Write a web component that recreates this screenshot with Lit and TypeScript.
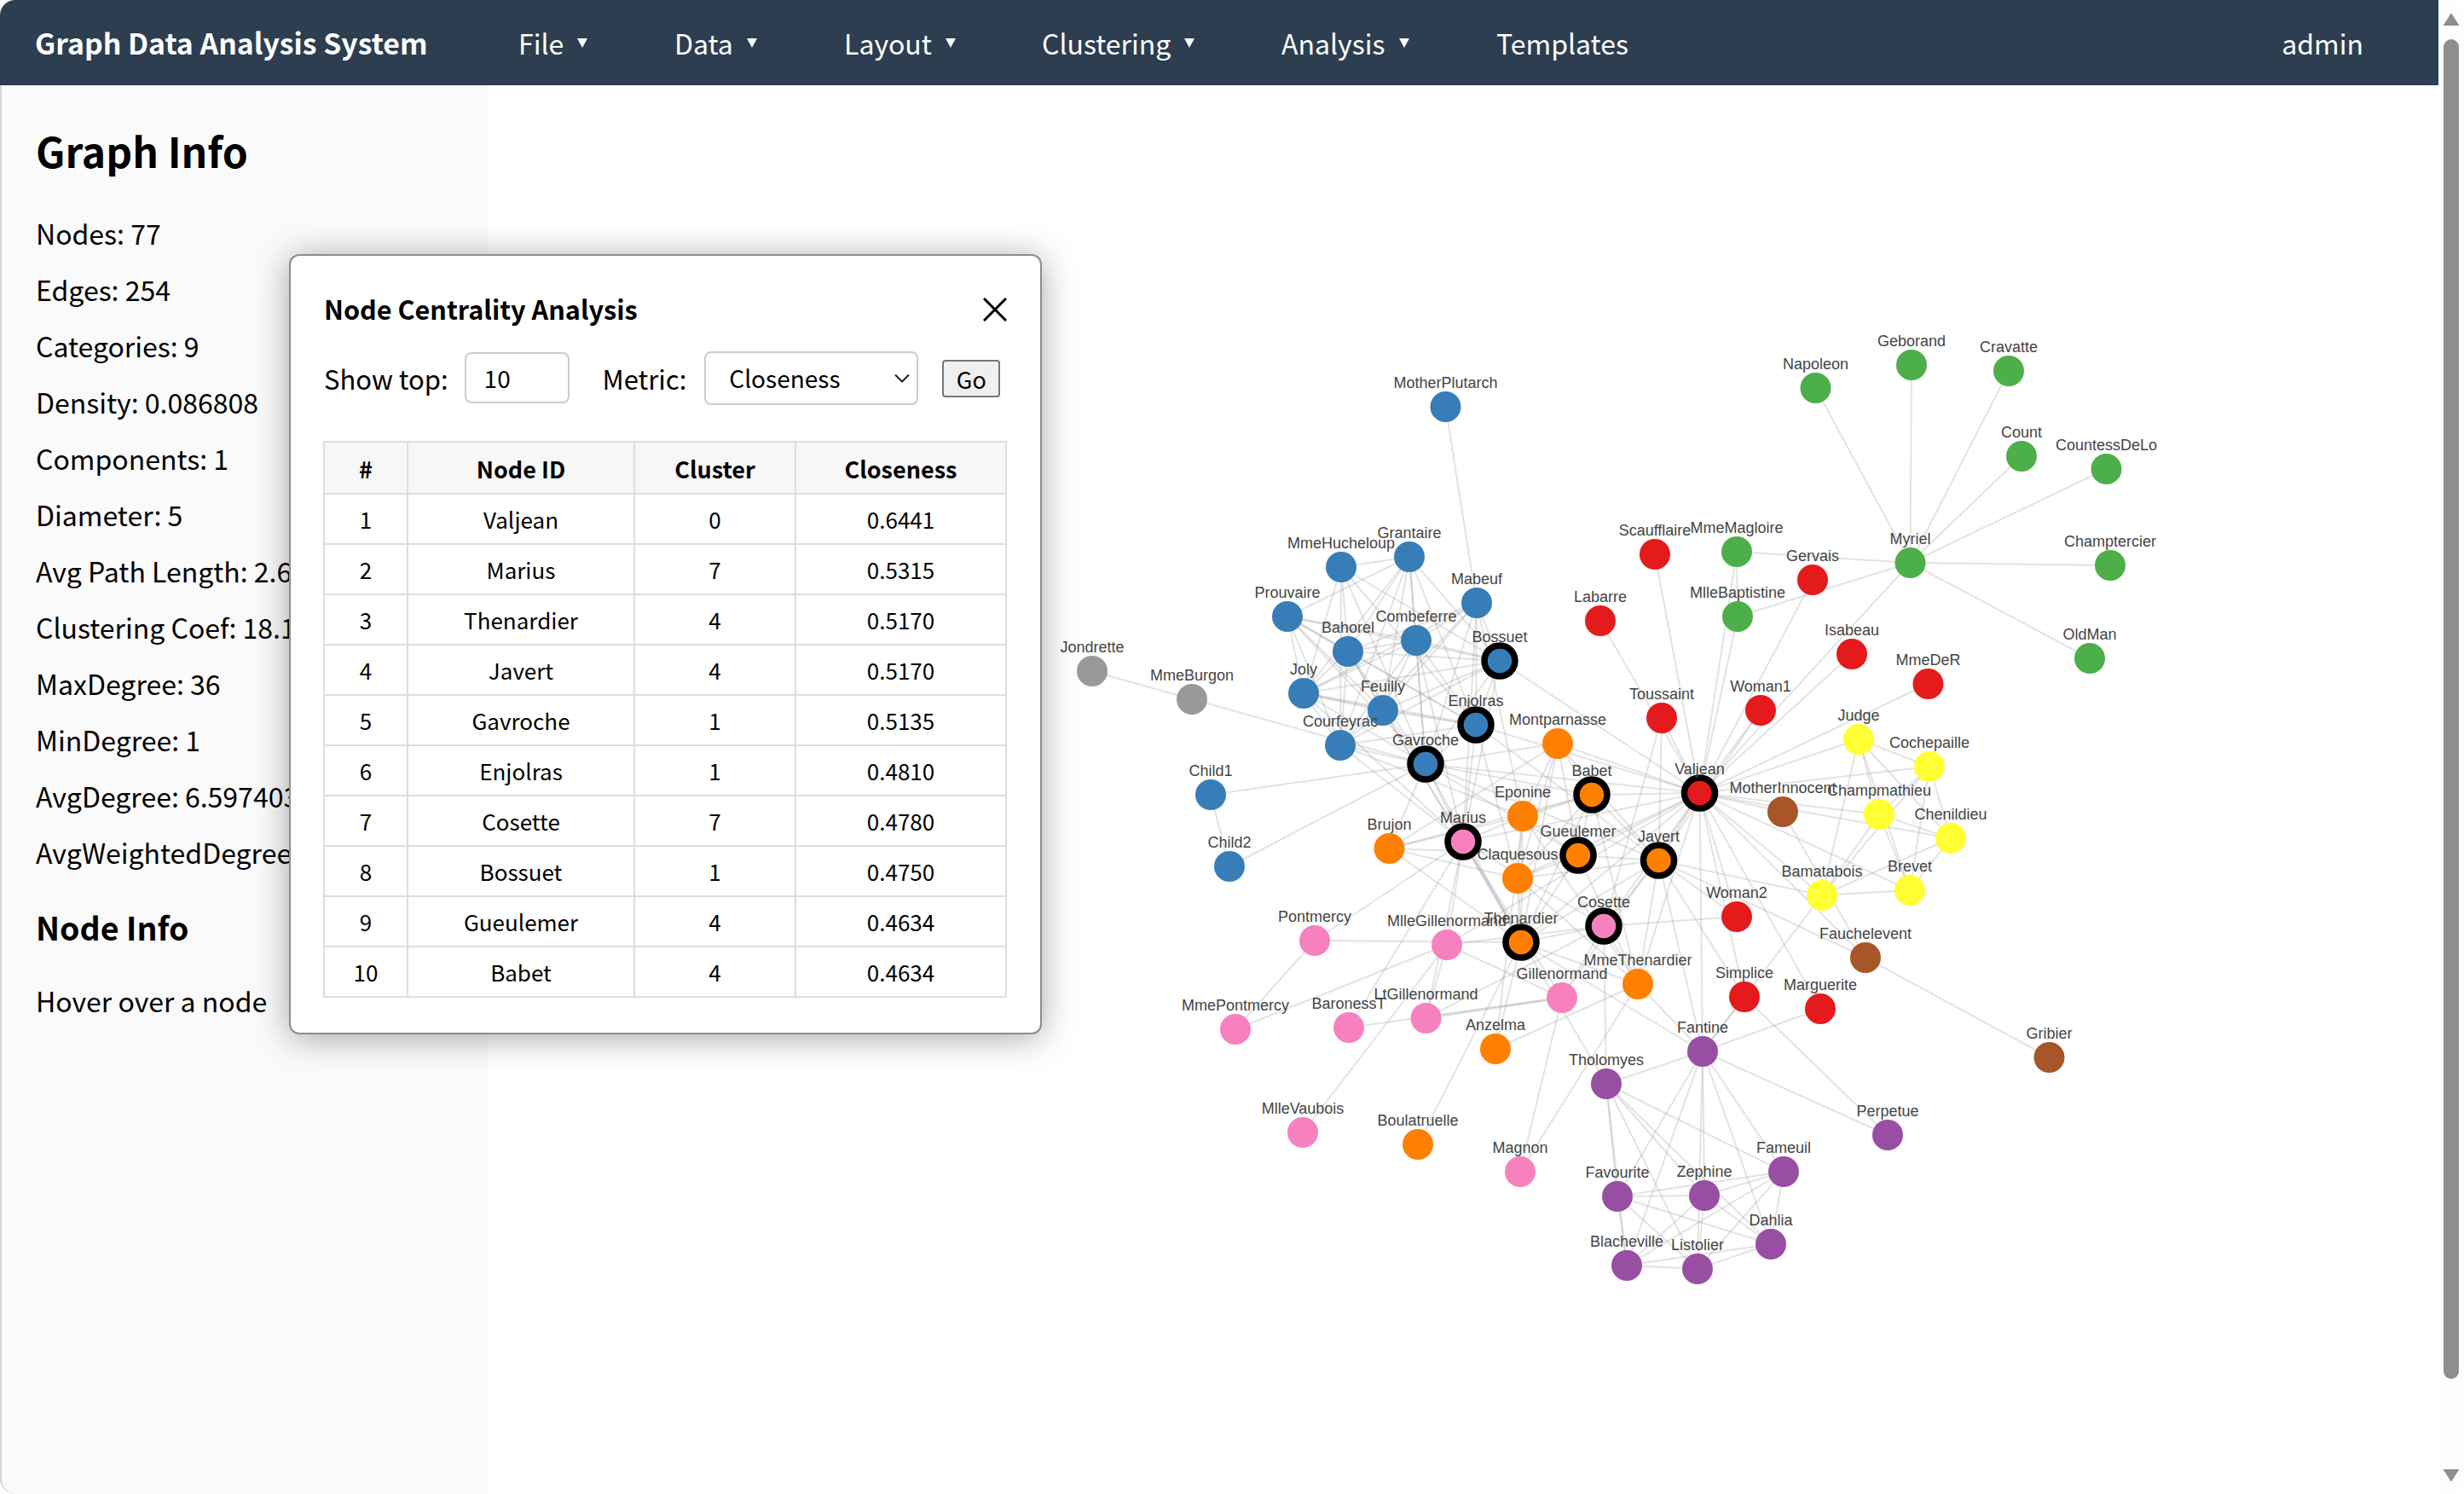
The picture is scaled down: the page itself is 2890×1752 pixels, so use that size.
import { LitElement, html, css, svg } from "lit";
import { customElement } from "lit/decorators.js";

const C: Record<string, string> = {
  blue: "#377eb8", green: "#4daf4a", red: "#e41a1c", orange: "#ff7f00", yellow: "#ffff33",
  brown: "#a65628", pink: "#f781bf", grey: "#999999", purple: "#984ea3",
};

// name, x, y, colour (page coordinates; graph canvas offset is subtracted on render)
const NODES: [string, number, number, string][] = [
  ["MotherPlutarch", 1695.5, 477, "blue"], ["Grantaire", 1653, 653, "blue"], ["MmeHucheloup", 1573, 665, "blue"],
  ["Mabeuf", 1732, 707, "blue"], ["Prouvaire", 1510, 723, "blue"], ["Combeferre", 1661, 751, "blue"],
  ["Bahorel", 1581, 764, "blue"], ["Bossuet", 1759, 775, "blue"], ["Joly", 1529, 813, "blue"],
  ["Feuilly", 1622, 833, "blue"], ["Enjolras", 1731, 850, "blue"], ["Courfeyrac", 1572, 874, "blue"],
  ["Gavroche", 1672, 896, "blue"], ["Child1", 1420, 932, "blue"], ["Child2", 1442, 1016, "blue"],
  ["Jondrette", 1281, 787, "grey"], ["MmeBurgon", 1398, 820, "grey"],
  ["Labarre", 1877, 728, "red"], ["Toussaint", 1949, 842, "red"], ["Valjean", 1993.5, 930, "red"],
  ["Scaufflaire", 1941, 650, "red"], ["Gervais", 2126, 680, "red"], ["Isabeau", 2172, 767, "red"],
  ["MmeDeR", 2261.5, 802, "red"], ["Woman1", 2065, 833, "red"], ["Woman2", 2037, 1075, "red"],
  ["Simplice", 2046, 1169, "red"], ["Marguerite", 2135, 1183, "red"],
  ["Montparnasse", 1827, 872, "orange"], ["Babet", 1867, 932, "orange"], ["Eponine", 1786, 957, "orange"],
  ["Brujon", 1629.5, 995, "orange"], ["Gueulemer", 1851, 1003, "orange"], ["Javert", 1945.5, 1009, "orange"],
  ["Claquesous", 1780, 1030, "orange"], ["Thenardier", 1784, 1105, "orange"], ["MmeThenardier", 1921, 1154, "orange"],
  ["Anzelma", 1754, 1230, "orange"], ["Boulatruelle", 1663, 1342, "orange"],
  ["Marius", 1716, 987, "pink"], ["Cosette", 1881, 1086, "pink"], ["Pontmercy", 1542, 1103, "pink"],
  ["MlleGillenormand", 1697, 1108, "pink"], ["Gillenormand", 1832, 1170, "pink"], ["MmePontmercy", 1449, 1207, "pink"],
  ["BaronessT", 1582, 1205, "pink"], ["LtGillenormand", 1672.5, 1194, "pink"], ["MlleVaubois", 1528, 1328, "pink"],
  ["Magnon", 1783, 1374, "pink"],
  ["Fantine", 1997, 1233, "purple"], ["Tholomyes", 1884, 1271, "purple"], ["Fameuil", 2092, 1374, "purple"],
  ["Favourite", 1897, 1403, "purple"], ["Zephine", 1999, 1402, "purple"], ["Dahlia", 2077, 1459, "purple"],
  ["Blacheville", 1908, 1484, "purple"], ["Listolier", 1991, 1488, "purple"], ["Perpetue", 2214, 1331, "purple"],
  ["Napoleon", 2129.5, 455, "green"], ["Geborand", 2242, 428, "green"], ["Cravatte", 2356, 435, "green"],
  ["Count", 2371, 535, "green"], ["CountessDeLo", 2470.5, 550, "green"], ["MmeMagloire", 2037, 647, "green"],
  ["Myriel", 2240.5, 660, "green"], ["Champtercier", 2475, 663, "green"], ["MlleBaptistine", 2038, 723, "green"],
  ["OldMan", 2451, 772, "green"],
  ["Judge", 2180, 867, "yellow"], ["Cochepaille", 2263, 899, "yellow"], ["Champmathieu", 2204, 955, "yellow"],
  ["Chenildieu", 2288, 983, "yellow"], ["Bamatabois", 2137, 1050, "yellow"], ["Brevet", 2240, 1044, "yellow"],
  ["MotherInnocent", 2091, 952, "brown"], ["Fauchelevent", 2188, 1123, "brown"], ["Gribier", 2403.5, 1240, "brown"],
];

const SELECTED = new Set(["Valjean", "Marius", "Thenardier", "Javert", "Gavroche", "Enjolras", "Cosette", "Bossuet", "Gueulemer", "Babet"]);

const EDGE_TEXT = `Napoleon-Myriel MlleBaptistine-Myriel MmeMagloire-Myriel MmeMagloire-MlleBaptistine CountessDeLo-Myriel Geborand-Myriel Champtercier-Myriel Cravatte-Myriel Count-Myriel OldMan-Myriel Valjean-Labarre Valjean-MmeMagloire Valjean-MlleBaptistine Valjean-Myriel Marguerite-Valjean MmeDeR-Valjean Isabeau-Valjean Gervais-Valjean Listolier-Tholomyes Fameuil-Tholomyes Fameuil-Listolier Blacheville-Tholomyes Blacheville-Listolier Blacheville-Fameuil Favourite-Tholomyes Favourite-Listolier Favourite-Fameuil Favourite-Blacheville Dahlia-Tholomyes Dahlia-Listolier Dahlia-Fameuil Dahlia-Blacheville Dahlia-Favourite Zephine-Tholomyes Zephine-Listolier Zephine-Fameuil Zephine-Blacheville Zephine-Favourite Zephine-Dahlia Fantine-Tholomyes Fantine-Listolier Fantine-Fameuil Fantine-Blacheville Fantine-Favourite Fantine-Dahlia Fantine-Zephine Fantine-Marguerite Fantine-Valjean MmeThenardier-Fantine MmeThenardier-Valjean Thenardier-MmeThenardier Thenardier-Fantine Thenardier-Valjean Cosette-MmeThenardier Cosette-Valjean Cosette-Tholomyes Cosette-Thenardier Javert-Valjean Javert-Fantine Javert-Thenardier Javert-MmeThenardier Javert-Cosette Fauchelevent-Valjean Fauchelevent-Javert Bamatabois-Fantine Bamatabois-Javert Bamatabois-Valjean Perpetue-Fantine Simplice-Perpetue Simplice-Valjean Simplice-Fantine Simplice-Javert Scaufflaire-Valjean Woman1-Valjean Woman1-Javert Judge-Valjean Judge-Bamatabois Champmathieu-Valjean Champmathieu-Judge Champmathieu-Bamatabois Brevet-Judge Brevet-Champmathieu Brevet-Valjean Brevet-Bamatabois Chenildieu-Judge Chenildieu-Champmathieu Chenildieu-Brevet Chenildieu-Valjean Chenildieu-Bamatabois Cochepaille-Judge Cochepaille-Champmathieu Cochepaille-Brevet Cochepaille-Chenildieu Cochepaille-Bamatabois Cochepaille-Valjean Pontmercy-Thenardier Boulatruelle-Thenardier Eponine-MmeThenardier Eponine-Thenardier Anzelma-Eponine Anzelma-Thenardier Anzelma-MmeThenardier Woman2-Valjean Woman2-Cosette Woman2-Javert MotherInnocent-Fauchelevent MotherInnocent-Valjean Gribier-Fauchelevent MmeBurgon-Jondrette Gavroche-MmeBurgon Gavroche-Thenardier Gavroche-Javert Gavroche-Valjean Gillenormand-Cosette Gillenormand-Valjean Magnon-Gillenormand Magnon-MmeThenardier MlleGillenormand-Gillenormand MlleGillenormand-Cosette MlleGillenormand-Valjean MmePontmercy-MlleGillenormand MmePontmercy-Pontmercy MlleVaubois-MlleGillenormand LtGillenormand-MlleGillenormand LtGillenormand-Gillenormand LtGillenormand-Cosette Marius-MlleGillenormand Marius-Gillenormand Marius-Pontmercy Marius-LtGillenormand Marius-Cosette Marius-Valjean Marius-Tholomyes Marius-Thenardier Marius-Eponine Marius-Gavroche BaronessT-Gillenormand BaronessT-Marius Mabeuf-Marius Mabeuf-Eponine Mabeuf-Gavroche Enjolras-Marius Enjolras-Gavroche Enjolras-Javert Enjolras-Mabeuf Enjolras-Valjean Combeferre-Enjolras Combeferre-Marius Combeferre-Gavroche Combeferre-Mabeuf Prouvaire-Gavroche Prouvaire-Enjolras Prouvaire-Combeferre Feuilly-Gavroche Feuilly-Prouvaire Feuilly-Enjolras Feuilly-Combeferre Feuilly-Mabeuf Feuilly-Marius Courfeyrac-Marius Courfeyrac-Enjolras Courfeyrac-Combeferre Courfeyrac-Gavroche Courfeyrac-Mabeuf Courfeyrac-Eponine Courfeyrac-Feuilly Courfeyrac-Prouvaire Bahorel-Combeferre Bahorel-Gavroche Bahorel-Courfeyrac Bahorel-Mabeuf Bahorel-Enjolras Bahorel-Feuilly Bahorel-Prouvaire Bahorel-Marius Bossuet-Marius Bossuet-Courfeyrac Bossuet-Gavroche Bossuet-Bahorel Bossuet-Enjolras Bossuet-Feuilly Bossuet-Prouvaire Bossuet-Combeferre Bossuet-Mabeuf Bossuet-Valjean Joly-Bahorel Joly-Bossuet Joly-Gavroche Joly-Courfeyrac Joly-Enjolras Joly-Feuilly Joly-Prouvaire Joly-Combeferre Joly-Mabeuf Joly-Marius Grantaire-Bossuet Grantaire-Enjolras Grantaire-Combeferre Grantaire-Courfeyrac Grantaire-Joly Grantaire-Gavroche Grantaire-Bahorel Grantaire-Feuilly Grantaire-Prouvaire MotherPlutarch-Mabeuf Gueulemer-Thenardier Gueulemer-Valjean Gueulemer-MmeThenardier Gueulemer-Javert Gueulemer-Gavroche Gueulemer-Eponine Babet-Thenardier Babet-Gueulemer Babet-Valjean Babet-MmeThenardier Babet-Javert Babet-Gavroche Babet-Eponine Claquesous-Thenardier Claquesous-Babet Claquesous-Gueulemer Claquesous-Valjean Claquesous-MmeThenardier Claquesous-Javert Claquesous-Eponine Claquesous-Enjolras Montparnasse-Javert Montparnasse-Babet Montparnasse-Gueulemer Montparnasse-Claquesous Montparnasse-Valjean Montparnasse-Gavroche Montparnasse-Eponine Montparnasse-Thenardier Toussaint-Cosette Toussaint-Javert Toussaint-Valjean Child1-Gavroche Child2-Gavroche Child2-Child1 Brujon-Babet Brujon-Gueulemer Brujon-Thenardier Brujon-Gavroche Brujon-Eponine Brujon-Claquesous Brujon-Montparnasse MmeHucheloup-Bossuet MmeHucheloup-Joly MmeHucheloup-Grantaire MmeHucheloup-Bahorel MmeHucheloup-Courfeyrac MmeHucheloup-Gavroche MmeHucheloup-Enjolras`;

const HEAVY = new Set(["LtGillenormand-Gillenormand", "Marius-Thenardier", "Claquesous-Thenardier", "Babet-Eponine", "Brujon-Marius", "Bahorel-Prouvaire", "Joly-Feuilly", "Joly-Enjolras"]);

const INFO = ["Nodes: 77", "Edges: 254", "Categories: 9", "Density: 0.086808", "Components: 1", "Diameter: 5",
  "Avg Path Length: 2.6411", "Clustering Coef: 18.12%", "MaxDegree: 36", "MinDegree: 1", "AvgDegree: 6.597403", "AvgWeightedDegree: 21.2987"];

const ROWS: [number, string, number, string][] = [
  [1, "Valjean", 0, "0.6441"], [2, "Marius", 7, "0.5315"], [3, "Thenardier", 4, "0.5170"], [4, "Javert", 4, "0.5170"],
  [5, "Gavroche", 1, "0.5135"], [6, "Enjolras", 1, "0.4810"], [7, "Cosette", 7, "0.4780"], [8, "Bossuet", 1, "0.4750"],
  [9, "Gueulemer", 4, "0.4634"], [10, "Babet", 4, "0.4634"],
];

const MENUS = [["File", 1], ["Data", 1], ["Layout", 1], ["Clustering", 1], ["Analysis", 1], ["Templates", 0]] as [string, number][];

const OX = 572, OY = 100;

@customElement("app-root")
export class AppRoot extends LitElement {
  static styles = css`
    :host { display: block; width: 2890px; height: 1752px; background: #fff; overflow: hidden;
      font-family: "Noto Sans CJK SC", "Noto Sans", sans-serif; color: #000; }
    .window { display: flex; height: 100%; }
    .page { flex: 1; min-width: 0; display: flex; flex-direction: column; position: relative; }
    .nav { height: 100px; flex: none; background: #2c3e50; color: #fff; display: flex; align-items: center;
      border-top-left-radius: 18px; padding-left: 41px; }
    .brand { font-size: 33.8px; font-weight: 700; width: 567px; white-space: nowrap; line-height: 1; }
    .menus { display: flex; flex: 1; align-items: center; }
    .menu { font-size: 32px; display: flex; align-items: center; white-space: nowrap; }
    .menu:nth-child(1) { width: 183px; }
    .menu:nth-child(2) { width: 199px; }
    .menu:nth-child(3) { width: 232px; }
    .menu:nth-child(4) { width: 281px; }
    .menu:nth-child(5) { width: 252px; }
    .caret { width: 0; height: 0; margin-left: 16px; border-left: 6px solid transparent; border-right: 6px solid transparent;
      border-top: 11px solid #fff; }
    .admin { font-size: 32px; margin-right: 88px; }
    .body { flex: 1; display: flex; min-height: 0; }
    .side { width: 572px; flex: none; background: #fafafa; border-left: 2px solid #d4d4d4; padding: 0 0 0 40px;
      box-sizing: border-box; overflow: hidden; white-space: nowrap; border-bottom-left-radius: 18px; }
    .side h2 { margin: 43px 0 0; font-size: 48px; line-height: 66px; font-weight: 700; }
    .side h3 { margin: 29px 0 0; font-size: 37.5px; line-height: 52px; font-weight: 700; }
    .info { margin-top: 31px; display: flex; flex-direction: column; }
    .info div { font-size: 32px; line-height: 66px; }
    .hover { font-size: 32px; line-height: 46px; margin-top: 37px; }
    .canvas { flex: 1; min-width: 0; position: relative; }
    .canvas svg { display: block; }
    .lbl { font-family: "Liberation Sans", Arial, sans-serif; font-size: 18px; fill: #444; text-anchor: middle; }
    .modal { position: absolute; left: 339px; top: 298px; width: 883px; height: 915px; box-sizing: border-box;
      background: #fff; border: 2px solid #8c8c8c; border-radius: 12px; box-shadow: 0 4px 40px rgba(0,0,0,.35);
      padding: 37px 40px 0 39px; }
    .head { display: flex; align-items: center; justify-content: space-between; height: 50px; }
    .head h4 { margin: 0; font-size: 30.6px; line-height: 50px; font-weight: 700; }
    .close { width: 28px; height: 28px; display: block; margin: 2px -1px 0 0; }
    .controls { display: flex; align-items: center; margin-top: 24px; height: 64px; font-size: 31px; }
    .controls label { white-space: nowrap; }
    .num { width: 123px; height: 60px; box-sizing: border-box; border: 2px solid #ccc; border-radius: 8px; margin-left: 19px;
      font: 28px "Noto Sans CJK SC", sans-serif; padding: 0 0 0 21px; color: #000; display: flex; align-items: center; }
    .metric { margin-left: 39px; }
    .sel { width: 251px; height: 63px; box-sizing: border-box; border: 2px solid #ccc; border-radius: 8px; margin-left: 21px;
      font-size: 28px; padding: 0 8px 0 27px; display: flex; align-items: center; justify-content: space-between; }
    .chev { width: 18px; height: 11px; display: block; }
    .go { width: 68px; height: 44px; box-sizing: border-box; margin: 2px 0 0 28px; background: #efefef; border: 2px solid #767676;
      border-radius: 4px; font-size: 27px; display: flex; align-items: center; justify-content: center; }
    table { border-collapse: collapse; margin: 42px 0 0 -1px; width: 800px; table-layout: fixed; text-align: center; }
    th, td { border: 2px solid #ddd; padding: 0; }
    th { background: #f7f7f7; height: 61px; font-size: 27px; font-weight: 700; padding-top: 1px; box-sizing: border-box; }
    td { height: 57px; font-size: 26px; }
    .scroll { width: 30px; flex: none; background: #fdfdfd; position: relative; border-radius: 0 18px 18px 0;
      display: flex; flex-direction: column; align-items: center; }
    .arrow { display: block; width: 18px; height: 14px; }
    .thumb { width: 18px; height: 1571px; background: #8e8e8e; border-radius: 9px; margin-top: 16px; }
    .arrow.up { margin-top: 16px; }
    .arrow.down { margin-top: 106px; }
  `;

  private graph() {
    const pos = new Map(NODES.map((n) => [n[0], n]));
    const edges = EDGE_TEXT.split(/\s+/).map((e) => e.split("-"));
    return svg`
      <g>
        ${edges.map(([a, b]) => {
          const p = pos.get(a), q = pos.get(b);
          if (!p || !q) return null;
          const heavy = HEAVY.has(a + "-" + b);
          return svg`<line x1=${p[1] - OX} y1=${p[2] - OY} x2=${q[1] - OX} y2=${q[2] - OY} stroke="#999" stroke-opacity="0.27" stroke-width=${heavy ? 3 : 2}></line>`;
        })}
      </g>
      <g>
        ${NODES.map((n) => SELECTED.has(n[0])
          ? svg`<circle cx=${n[1] - OX} cy=${n[2] - OY} r="18" fill=${C[n[3]]} stroke="#000" stroke-width="7.5"></circle>`
          : svg`<circle cx=${n[1] - OX} cy=${n[2] - OY} r="18" fill=${C[n[3]]}></circle>`)}
      </g>
      <g>
        ${NODES.map((n) => svg`<text class="lbl" x=${n[1] - OX} y=${n[2] - OY - 22}>${n[0]}</text>`)}
      </g>`;
  }

  render() {
    return html`
      <div class="window">
        <div class="page">
          <div class="nav">
            <div class="brand">Graph Data Analysis System</div>
            <div class="menus">
              ${MENUS.map(([m, c]) => html`<div class="menu">${m}${c ? html`<span class="caret"></span>` : null}</div>`)}
            </div>
            <div class="admin">admin</div>
          </div>
          <div class="body">
            <div class="side">
              <h2>Graph Info</h2>
              <div class="info">${INFO.map((t) => html`<div>${t}</div>`)}</div>
              <h3>Node Info</h3>
              <div class="hover">Hover over a node</div>
            </div>
            <div class="canvas">
              <svg width="2288" height="1652" viewBox="0 0 2288 1652">${this.graph()}</svg>
            </div>
          </div>
          <div class="modal">
            <div class="head">
              <h4>Node Centrality Analysis</h4>
              <svg class="close" viewBox="0 0 28 28"><path d="M1 1 L27 27 M27 1 L1 27" stroke="#000" stroke-width="3" fill="none"></path></svg>
            </div>
            <div class="controls">
              <label>Show top:</label>
              <div class="num">10</div>
              <label class="metric">Metric:</label>
              <div class="sel">Closeness
                <svg class="chev" viewBox="0 0 18 11"><path d="M1 1.5 L9 9.5 L17 1.5" stroke="#222" stroke-width="2" fill="none"></path></svg>
              </div>
              <div class="go">Go</div>
            </div>
            <table>
              <colgroup><col style="width:98px" /><col style="width:266px" /><col style="width:189px" /><col style="width:247px" /></colgroup>
              <thead><tr><th>#</th><th>Node ID</th><th>Cluster</th><th>Closeness</th></tr></thead>
              <tbody>
                ${ROWS.map((r) => html`<tr><td>${r[0]}</td><td>${r[1]}</td><td>${r[2]}</td><td>${r[3]}</td></tr>`)}
              </tbody>
            </table>
          </div>
        </div>
        <div class="scroll">
          <svg class="arrow up" viewBox="0 0 18 14"><path d="M9 0 L18 14 L0 14 Z" fill="#8e8e8e" stroke="#8e8e8e" stroke-linejoin="round"></path></svg>
          <div class="thumb"></div>
          <svg class="arrow down" viewBox="0 0 18 14"><path d="M0 0 L18 0 L9 14 Z" fill="#8e8e8e" stroke="#8e8e8e" stroke-linejoin="round"></path></svg>
        </div>
      </div>`;
  }
}
